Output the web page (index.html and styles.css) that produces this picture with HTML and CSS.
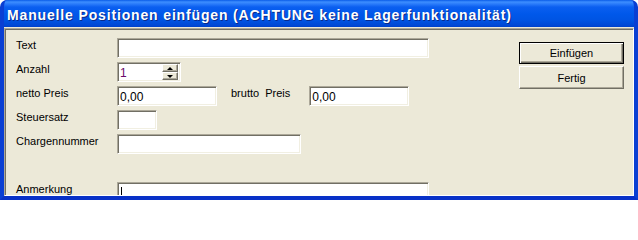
FILE: index.html
```html
<!DOCTYPE html>
<html lang="de">
<head>
<meta charset="utf-8">
<title>Manuelle Positionen einfügen</title>
<link rel="stylesheet" href="styles.css">
</head>
<body>
<div class="window">
  <div class="titlebar"><span class="title">Manuelle Positionen einfügen (ACHTUNG keine Lagerfunktionalität)</span></div>
  <div class="client">
    <div class="panel">
      <div class="form">
        <label class="lbl">Text</label>
        <div class="field w-text"></div>

        <label class="lbl">Anzahl</label>
        <div class="field spin">
          <span class="val purple">1</span>
          <span class="spinbtns">
            <span class="sbtn"><span class="tri up"></span></span>
            <span class="sbtn"><span class="tri down"></span></span>
          </span>
        </div>

        <label class="lbl">netto Preis</label>
        <div class="pair">
          <div class="field w-price"><span class="val">0,00</span></div>
          <label class="lbl2">brutto&nbsp;&nbsp;Preis</label>
          <div class="field w-price"><span class="val">0,00</span></div>
        </div>

        <label class="lbl">Steuersatz</label>
        <div class="field w-tax"></div>

        <label class="lbl">Chargennummer</label>
        <div class="field w-charge"></div>

        <div class="empty"></div>
        <div class="empty"></div>

        <label class="lbl">Anmerkung</label>
        <div class="field w-text"><span class="caret"></span></div>
      </div>
      <div class="buttons">
        <button class="btn default">Einfügen</button>
        <button class="btn">Fertig</button>
      </div>
    </div>
  </div>
</div>
</body>
</html>
```
FILE: styles.css
```css
html, body {
  margin: 0;
  padding: 0;
  background: #ffffff;
}
body {
  width: 638px;
  height: 200px;
  overflow: hidden;
  font-family: "Liberation Sans", Arial, sans-serif;
}
.window {
  width: 638px;
  height: 200px;
  box-sizing: border-box;
  border-radius: 7px 7px 0 0;
  background: #0A3FD3;
  border-left: 4px solid #0A3FD3;
  border-right: 4px solid #0A3FD3;
  border-bottom: 4px solid #0831C8;
  overflow: hidden;
}
.titlebar {
  height: 27px;
  margin: 0 -4px;
  display: flex;
  align-items: center;
  padding-left: 7px;
  background: linear-gradient(to bottom, #0A5CE8 0px, #3D8EFF 2px, #2A7BFA 4px, #0B5FF0 7px, #0058EA 14px, #0054E3 20px, #0049D6 25px, #0040CC 27px);
}
.title {
  color: #ffffff;
  font-weight: bold;
  font-size: 14px;
  letter-spacing: 0.85px;
  text-shadow: 1px 1px 0 #0B2A8A;
  margin-top: 3px;
  white-space: nowrap;
}
.client {
  height: 169px;
  box-sizing: border-box;
  padding-top: 1px;
  background: #ECE9D8;
  display: flex;
  overflow: hidden;
}
.panel {
  flex: 1;
  display: flex;
  box-sizing: border-box;
  height: 168px;
  border-top: 1px solid #ACA899;
  border-left: 1px solid #ACA899;
  border-right: 1px solid #ffffff;
  border-bottom: 1px solid #ffffff;
  box-shadow: inset 1px 1px 0 #716F64;
  padding: 9px 9px 0 11px;
  overflow: hidden;
}
.form {
  display: grid;
  grid-template-columns: 101px auto;
  grid-auto-rows: 20px;
  row-gap: 4px;
  align-items: start;
  align-self: flex-start;
}
.lbl, .lbl2 {
  font-size: 11px;
  line-height: 13px;
  color: #000000;
  white-space: nowrap;
}
.lbl { margin-top: 1px; }
.lbl2 {
  margin: 1px 19px 0 14px;
}
.empty { height: 20px; }
.pair {
  display: flex;
  align-items: flex-start;
}
.field {
  box-sizing: border-box;
  height: 20px;
  background: #ffffff;
  border: 1px solid;
  border-color: #ACA899 #ffffff #ffffff #ACA899;
  box-shadow: inset 1px 1px 0 #716F64, inset -1px -1px 0 #F1EFE2;
  display: flex;
  align-items: center;
  padding-left: 2px;
  font-size: 12px;
  color: #000000;
}
.w-text { width: 312px; }
.w-price { width: 100px; }
.w-tax { width: 40px; }
.w-charge { width: 184px; }
.val { line-height: 14px; padding-top: 1px; }
.purple { color: #6A0A6A; }
.spin {
  width: 64px;
  padding: 1px 2px 1px 2px;
  justify-content: space-between;
  align-items: stretch;
}
.spin .val { display: flex; align-items: center; }
.spinbtns {
  width: 16px;
  display: flex;
  flex-direction: column;
}
.sbtn {
  flex: 1;
  box-sizing: border-box;
  background: #ECE9D8;
  border: 1px solid;
  border-color: #ffffff #716F64 #716F64 #ffffff;
  box-shadow: inset -1px -1px 0 #ACA899;
  display: flex;
  align-items: center;
  justify-content: center;
}
.tri {
  width: 0;
  height: 0;
  border-left: 3px solid transparent;
  border-right: 3px solid transparent;
}
.tri.up { border-bottom: 3px solid #000; }
.tri.down { border-top: 3px solid #000; }
.caret {
  width: 1px;
  height: 11px;
  background: #000;
  margin-left: 1px;
}
.buttons {
  margin-left: auto;
  margin-top: 4px;
  display: flex;
  flex-direction: column;
  align-self: flex-start;
  gap: 2px;
}
.btn {
  box-sizing: border-box;
  width: 105px;
  height: 23px;
  margin: 0;
  padding: 0;
  font-family: "Liberation Sans", Arial, sans-serif;
  font-size: 11px;
  color: #000000;
  background: #ECE9D8;
  border: 1px solid;
  border-color: #ffffff #716F64 #716F64 #ffffff;
  box-shadow: inset -1px -1px 0 #ACA899;
  border-radius: 0;
}
.btn.default {
  height: 22px;
  border: 1px solid #000000;
  box-shadow: inset 1px 1px 0 #ffffff, inset -1px -1px 0 #716F64, inset -2px -2px 0 #ACA899;
}
```
